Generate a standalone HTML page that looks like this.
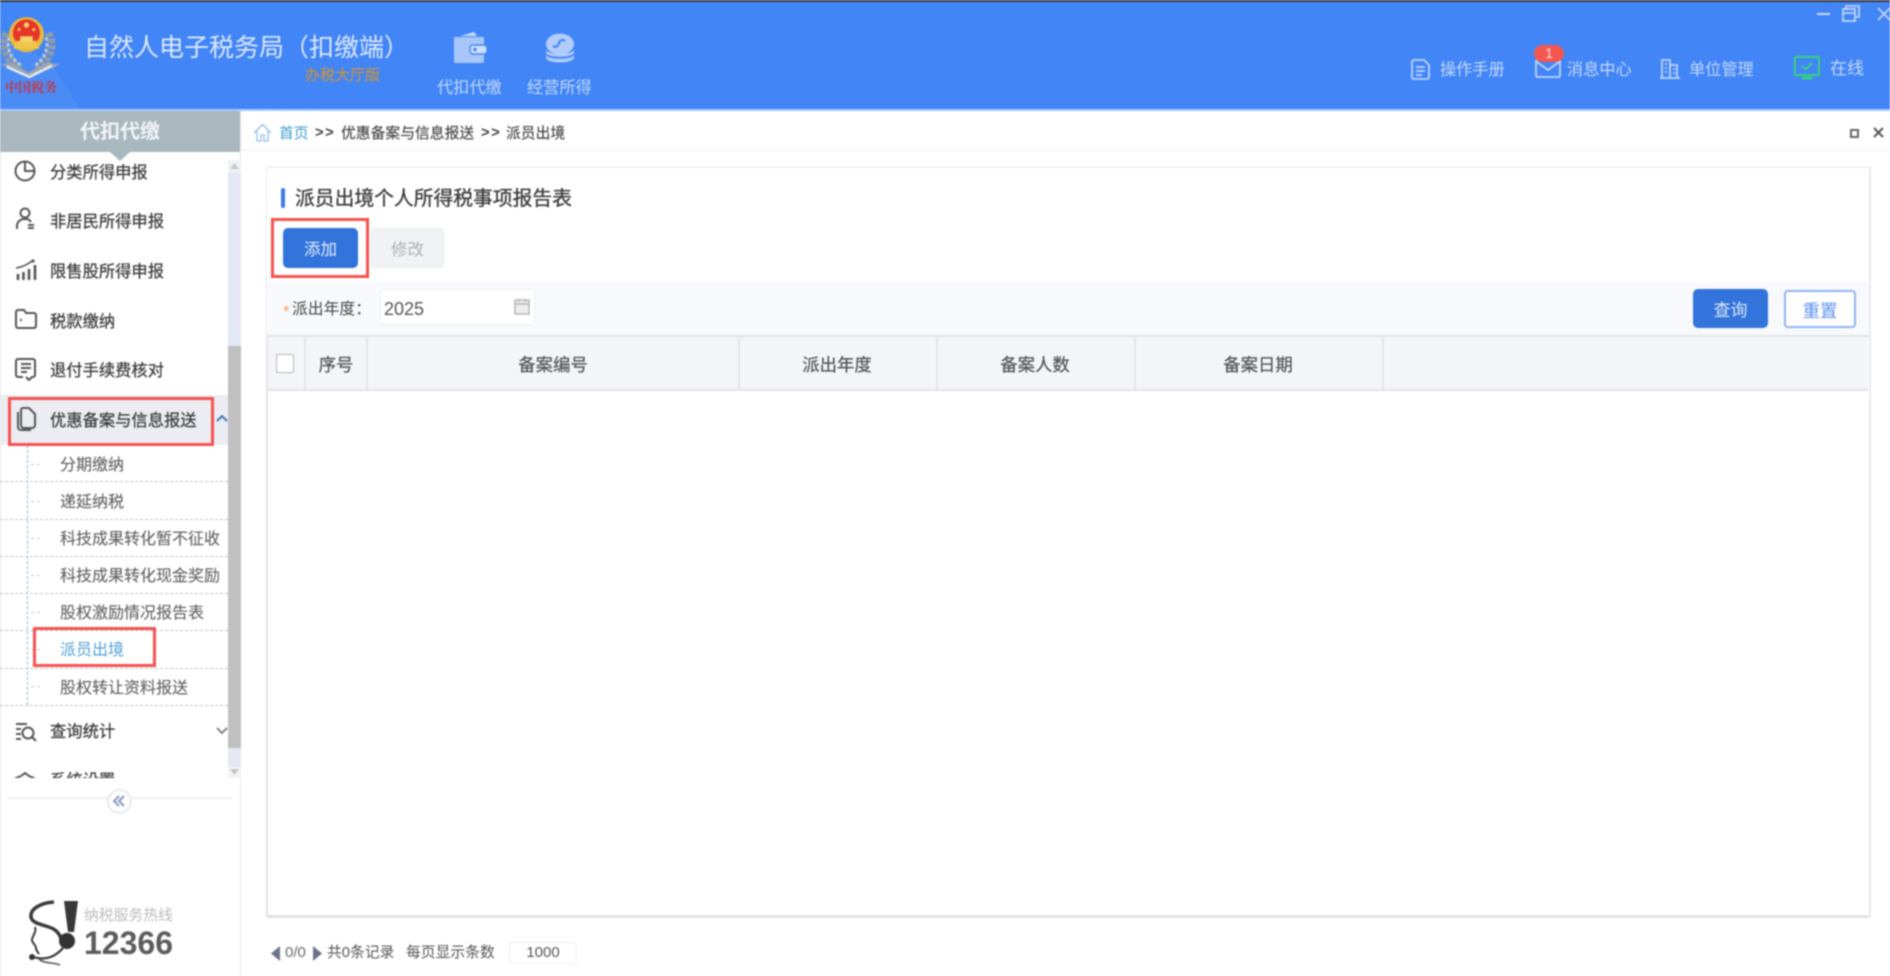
<!DOCTYPE html>
<html lang="zh-CN">
<head>
<meta charset="utf-8">
<title>自然人电子税务局（扣缴端）</title>
<style>
html,body{margin:0;padding:0;width:1890px;height:976px;overflow:hidden;background:#fff}
#w{position:relative;width:1890px;height:976px;overflow:hidden;background:#fff;filter:blur(.7px);font-family:"Liberation Sans","Noto Sans CJK SC",sans-serif;color:#444}
#w div,#w svg{position:absolute}
.t{white-space:nowrap;line-height:24px;height:24px}
.h{color:rgba(255,255,255,.68);font-size:16.2px}
.m{font-size:16.3px;color:#3a3a3a;left:50px;-webkit-text-stroke:.25px #3a3a3a}
.s{font-size:16px;color:#606060;left:60px;-webkit-text-stroke:.1px #606060}
.d{left:0;width:228px;border-top:1px dashed #c4c4c4;height:0}
.b{left:31px;width:9px;border-top:1px dashed #b4cfec;height:0}
.th{font-size:17.4px;color:#505050;top:353px;text-align:center;-webkit-text-stroke:.2px #505050}
.sep{top:337px;height:53px;width:2px;background:#e2e4e8}
.i{fill:none;stroke:#555;stroke-width:2}
.ih{fill:none;stroke:rgba(255,255,255,.65);stroke-width:1.8}
</style>
</head>
<body>
<div id="w">
  <!-- header -->
  <div style="left:0;top:0;width:1890px;height:110px;background:#4285f6"></div>
  <div style="left:0;top:0;width:1890px;height:2px;background:#33363b"></div>
  <div style="left:0;top:109px;width:1890px;height:2px;background:#a9c8fa"></div>
  <svg style="left:0;top:2px" width="90" height="108"><polygon points="0,30 50,60 80,107 0,107" fill="#4a8bf6"/></svg>

  <!-- emblem -->
  <svg style="left:0;top:0" width="66" height="80" viewBox="0 0 66 80">
    <g transform="translate(-3.500 -1) scale(1.13)">
    <path d="M9 30C4 42 8 54 22 62" fill="none" stroke="#8f9ca9" stroke-width="7" stroke-dasharray="4 1.500"/>
    <path d="M46 30C52 42 48 52 36 62" fill="none" stroke="#8f9ca9" stroke-width="7" stroke-dasharray="4 1.500"/>
    <path d="M11 34C9 44 12 52 22 59M44 34C46 44 43 52 34 59" fill="none" stroke="#c3ccd4" stroke-width="2.500" stroke-dasharray="3 2"/>
    <circle cx="26.500" cy="31.500" r="15.500" fill="#e6bb3e"/>
    <circle cx="26.500" cy="30" r="12" fill="#e8352a"/>
    <path d="M18 37h17l3 7H15z" fill="#efc64a"/>
    <rect x="21" y="33" width="11" height="5" fill="#f2d468"/>
    <circle cx="26.500" cy="23" r="2.300" fill="#f7dc60"/><circle cx="20" cy="27" r="1.300" fill="#f7dc60"/><circle cx="33" cy="27" r="1.300" fill="#f7dc60"/>
    <path d="M4 58l9-2 15 9 17-9 11 2-27 12z" fill="#9aa6b1"/>
    <path d="M9 60l20 9 20-10" fill="none" stroke="#e4e9ee" stroke-width="2.200"/>
    </g>
  </svg>
  <div class="t" style="left:5px;top:76px;width:54px;font:700 13px/22px 'Noto Serif CJK SC','Liberation Serif',serif;color:#c8343f;white-space:nowrap">中国税务</div>

  <div class="t" style="left:84px;top:32px;font-size:25px;line-height:32px;height:32px;color:rgba(255,255,255,.82)">自然人电子税务局（扣缴端）</div>
  <div class="t" style="left:305px;top:64px;font-size:15px;color:#c39243;-webkit-text-stroke:.2px #c39243">办税大厅版</div>

  <!-- top nav icons -->
  <svg style="left:452px;top:31px" width="36" height="34" viewBox="0 0 36 34">
    <path d="M2 6h28a2 2 0 0 1 2 2v22a2 2 0 0 1-2 2H4a2 2 0 0 1-2-2z" fill="#a9c6fb"/>
    <path d="M8 5l14-4 3 4z" fill="#c7dafc"/>
    <rect x="18" y="14" width="17" height="9" rx="3" fill="#cfe0fd" stroke="#4285f6" stroke-width="1.400"/>
    <circle cx="23" cy="18.500" r="1.800" fill="#4285f6"/>
  </svg>
  <div class="t h" style="left:437px;top:76px">代扣代缴</div>
  <svg style="left:545px;top:33px" width="30" height="32" viewBox="0 0 30 32">
    <ellipse cx="15" cy="11" rx="14" ry="10.500" fill="#b2ccfb"/>
    <path d="M20 8c-2-2-5-1-6 2s-3 5-6 3" fill="none" stroke="#4285f6" stroke-width="2.200"/>
    <path d="M1 17c2 5 26 5 28 0v3c-2 5-26 5-28 0zM1 22c2 5 26 5 28 0v3c-2 6-26 6-28 0z" fill="#b2ccfb"/>
  </svg>
  <div class="t h" style="left:527px;top:76px">经营所得</div>

  <!-- right nav -->
  <svg class="ih" style="left:1411px;top:59px" width="20" height="21" viewBox="0 0 20 21"><path d="M3 1h10l5 5v12a2 2 0 0 1-2 2H3a2 2 0 0 1-2-2V3a2 2 0 0 1 2-2zM5 8h9M5 12h9M5 16h6"/></svg>
  <div class="t h" style="left:1440px;top:58px">操作手册</div>
  <svg class="ih" style="left:1535px;top:59px" width="26" height="19" viewBox="0 0 26 19"><rect x="1" y="1" width="24" height="17" rx="1.500"/><path d="M2 3l11 8 11-8"/></svg>
  <div style="left:1534px;top:45px;width:30px;height:17px;border-radius:9px;background:#f4574f;color:#ffdcd8;font-size:14px;line-height:17px;text-align:center">1</div>
  <div class="t h" style="left:1567px;top:58px">消息中心</div>
  <svg class="ih" style="left:1659px;top:59px" width="22" height="20" viewBox="0 0 22 20"><path d="M3 19V1h8v18M11 6h7v13M1 19h20M6 5h2M6 9h2M6 13h2M14 10h2M14 14h2"/></svg>
  <div class="t h" style="left:1689px;top:58px">单位管理</div>
  <svg style="left:1794px;top:56px" width="26" height="24" viewBox="0 0 26 24" fill="none" stroke="#33d27f" stroke-width="2"><rect x="1" y="1" width="24" height="18" rx="1"/><path d="M8 10l4 3 6-6"/><path d="M8 22h10" stroke-width="3"/></svg>
  <div class="t h" style="left:1830px;top:57px;font-size:17px">在线</div>

  <!-- window controls -->
  <div style="left:1817px;top:13px;width:13px;height:2px;background:rgba(255,255,255,.72)"></div>
  <svg class="ih" style="left:1842px;top:5px" width="18" height="17" viewBox="0 0 18 17"><rect x="1" y="4" width="12" height="12" fill="none"/><path d="M4 4V1h13v11h-3M2 8h10"/></svg>
  <svg class="ih" style="left:1877px;top:7px" width="13" height="14" viewBox="0 0 13 14"><path d="M1 1l12 12M13 1L1 13"/></svg>

  <!-- sidebar -->
  <div style="left:0;top:111px;width:240px;height:41px;background:#a9b7bf"></div>
  <svg style="left:110px;top:152px" width="20" height="9"><polygon points="0,0 20,0 10,9" fill="#a9b7bf"/></svg>
  <div class="t" style="left:80px;top:120px;font-size:20px;color:rgba(255,255,255,.85);font-weight:700">代扣代缴</div>
  <div style="left:0;top:152px;width:1px;height:824px;background:#e3e3e3"></div>
  <div style="left:240px;top:111px;width:1px;height:865px;background:#e6e6e6"></div>

  <!-- icons -->
  <svg class="i" style="left:14px;top:160px" width="22" height="22" viewBox="0 0 22 22" stroke-width="2.200"><circle cx="11" cy="11" r="9.500"/><path d="M11 1.500V11H20.500"/></svg>
  <svg class="i" style="left:15px;top:207px" width="20" height="23" viewBox="0 0 20 23" stroke-width="1.800"><circle cx="10" cy="6" r="4.500"/><path d="M2 22v-3c0-4 3-7 8-7 3 0 5 1 6 3M13 18h6M13 21h6"/></svg>
  <svg class="i" style="left:15px;top:259px" width="22" height="22" viewBox="0 0 22 22"><path d="M1 9c6-1 11-3 16-7" stroke-width="1.600"/><circle cx="18" cy="2" r="1.600" fill="#555" stroke="none"/><path d="M3 21v-6M8.500 21v-8M14 21V10M20 21V6" stroke-width="2.600"/></svg>
  <svg class="i" style="left:15px;top:309px" width="22" height="20" viewBox="0 0 22 20" stroke-width="1.800"><path d="M1 3c0-1 1-2 2-2h6l2 3h8c1 0 2 1 2 2v11c0 1-1 2-2 2H3c-1 0-2-1-2-2z"/><path d="M5 11h2"/></svg>
  <svg class="i" style="left:15px;top:358px" width="21" height="23" viewBox="0 0 21 23"><path d="M8 19H3a2 2 0 0 1-2-2V3a2 2 0 0 1 2-2h15a2 2 0 0 1 2 2v14a2 2 0 0 1-2 2h-1l-3 3-3-3"/><path d="M6 6h10M6 10h10M6 14h6"/></svg>

  <div class="t m" style="top:161px">分类所得申报</div>
  <div class="t m" style="top:210px">非居民所得申报</div>
  <div class="t m" style="top:260px">限售股所得申报</div>
  <div class="t m" style="top:310px">税款缴纳</div>
  <div class="t m" style="top:359px">退付手续费核对</div>

  <!-- active row -->
  <div style="left:1px;top:395px;width:227px;height:50px;background:#ebedf2"></div>
  <svg class="i" style="left:16px;top:407px" width="20" height="24" viewBox="0 0 20 24"><path d="M5 3a2 2 0 0 1 2-2h6l6 6v11a3 3 0 0 1-3 3H8a3 3 0 0 1-3-3z"/><path d="M2 5v15a3 3 0 0 0 3 3h10"/></svg>
  <div class="t m" style="top:409px">优惠备案与信息报送</div>
  <svg style="left:216px;top:414px" width="12" height="8" fill="none" stroke="#3f78b8" stroke-width="2"><path d="M1 7l5-5 5 5"/></svg>

  <!-- sub menu -->
  <div style="left:27px;top:445px;height:260px;border-left:1px dashed #8db2e0;width:0"></div>
  <div class="b" style="top:464px"></div><div class="b" style="top:501px"></div><div class="b" style="top:538px"></div>
  <div class="b" style="top:575px"></div><div class="b" style="top:612px"></div><div class="b" style="top:649px"></div><div class="b" style="top:686px"></div>
  <div class="d" style="top:481px"></div><div class="d" style="top:519px"></div><div class="d" style="top:556px"></div>
  <div class="d" style="top:593px"></div><div class="d" style="top:630px"></div><div class="d" style="top:668px"></div><div class="d" style="top:705px"></div>
  <div class="t s" style="top:454px">分期缴纳</div>
  <div class="t s" style="top:491px">递延纳税</div>
  <div class="t s" style="top:528px">科技成果转化暂不征收</div>
  <div class="t s" style="top:565px">科技成果转化现金奖励</div>
  <div class="t s" style="top:602px">股权激励情况报告表</div>
  <div class="t s" style="top:639px;color:#4f9fd6;-webkit-text-stroke:0">派员出境</div>
  <div class="t s" style="top:677px">股权转让资料报送</div>

  <svg class="i" style="left:15px;top:722px" width="22" height="20" viewBox="0 0 22 20" stroke-width="1.600"><path d="M1 2h11M1 7h5M1 12h5M1 17h5"/><circle cx="13" cy="11" r="5.500"/><path d="M17 15l4 4"/></svg>
  <div class="t m" style="top:720px">查询统计</div>
  <svg style="left:216px;top:727px" width="12" height="8" fill="none" stroke="#888" stroke-width="2"><path d="M1 1l5 5 5-5"/></svg>
  <!-- clipped row -->
  <div style="left:0;top:766px;width:228px;height:12px;overflow:hidden">
    <svg class="i" style="left:14px;top:3px" width="22" height="22" viewBox="0 0 22 22"><path d="M2 9l5-2 4-3 4 3 5 2v8H2z"/></svg>
    <div class="t m" style="top:3px">系统设置</div>
  </div>

  <!-- scrollbar -->
  <div style="left:228px;top:160px;width:13px;height:618px;background:#e3e8f2"></div>
  <div style="left:228px;top:160px;width:13px;height:13px;background:#f0f1f4"></div>
  <svg style="left:230px;top:163px" width="10" height="7"><polygon points="0,6 9,6 4.500,0" fill="#c8c8c8"/></svg>
  <div style="left:228px;top:346px;width:13px;height:402px;background:#c0c0c0"></div>
  <div style="left:228px;top:767px;width:13px;height:11px;background:#f3f3f3"></div>
  <svg style="left:230px;top:769px" width="10" height="7"><polygon points="0,0 9,0 4.500,6" fill="#c4c4c4"/></svg>

  <!-- collapse -->
  <div style="left:7px;top:797px;width:226px;height:2px;background:#eeeff1"></div>
  <div style="left:107px;top:789px;width:21px;height:21px;background:#fff;border:2px solid #e9ebf1;border-radius:50%"></div>
  <svg style="left:113px;top:795px" width="12" height="12" fill="none" stroke="#8d9ec8" stroke-width="2.200"><path d="M6 1L1 6l5 5M11 1L6 6l5 5"/></svg>

  <!-- hotline -->
  <svg style="left:28px;top:899px" width="50" height="68" viewBox="0 0 50 68">
    <path d="M26 3C12 4 2 10 3 18c1 8 18 8 24 13 4 3 7 8 6 13" fill="none" stroke="#3a3a3a" stroke-width="3.500"/>
    <path d="M36 2h14l-4 31h-6z" fill="#383838"/>
    <circle cx="39" cy="42" r="8" fill="#333"/>
    <path d="M7 28c2 5-3 9-3 13 0 3 4 5 4 8 0 3 2 4 3 6" fill="none" stroke="#3a3a3a" stroke-width="2"/>
    <path d="M35 49C28 57 18 62 5 58" fill="none" stroke="#3a3a3a" stroke-width="2.200"/>
    <circle cx="4" cy="58" r="3" fill="#333"/>
    <path d="M11 60c5 5 14 3 21 6" fill="none" stroke="#555" stroke-width="1.600"/>
  </svg>
  <div class="t" style="left:84px;top:904px;font-size:14.800px;color:#bcbcbc">纳税服务热线</div>
  <div class="t" style="left:84px;top:925px;font-size:32px;line-height:36px;height:36px;font-weight:700;color:#5c5c5c">12366</div>

  <!-- breadcrumb -->
  <svg style="left:253px;top:123px" width="19" height="20" viewBox="0 0 19 20" fill="none" stroke="#a8cbe8" stroke-width="1.600"><path d="M1 10l8.500-8.500L18 10M4 8v10h4v-6h3v6h4V8"/></svg>
  <div class="t" style="left:279px;top:122px;font-size:14.800px;color:#3d9ccf">首页</div>
  <div class="t" style="left:315px;top:121px;font-size:14.800px;color:#444;font-weight:700;letter-spacing:1.500px">&gt;&gt;</div>
  <div class="t" style="left:341px;top:122px;font-size:14.800px;color:#444;-webkit-text-stroke:.15px #444">优惠备案与信息报送</div>
  <div class="t" style="left:481px;top:121px;font-size:14.800px;color:#444;font-weight:700;letter-spacing:1.500px">&gt;&gt;</div>
  <div class="t" style="left:506px;top:122px;font-size:14.800px;color:#444;-webkit-text-stroke:.15px #444">派员出境</div>
  <div style="left:241px;top:150px;width:1649px;height:1px;background:#f0f1f3"></div>
  <div style="left:1850px;top:129px;width:5px;height:5px;border:2px solid #666"></div>
  <svg style="left:1873px;top:127px" width="11" height="11" fill="none" stroke="#555" stroke-width="2"><path d="M1 1l9 9M10 1L1 10"/></svg>

  <!-- content card -->
  <div style="left:266px;top:167px;width:1604px;height:750px;border:1px solid #e9eaec;box-sizing:border-box;background:#fff"></div>
  <div style="left:281px;top:188px;width:4px;height:20px;background:#3b7bea;border-radius:2px"></div>
  <div class="t" style="left:295px;top:187px;font-size:19.800px;color:#3b3b3b;-webkit-text-stroke:.35px #3b3b3b">派员出境个人所得税事项报告表</div>

  <div style="left:283px;top:228px;width:75px;height:40px;background:#3274dc;border-radius:5px;color:rgba(255,255,255,.88);font-size:16.500px;line-height:44px;text-align:center">添加</div>
  <div style="left:371px;top:228px;width:73px;height:40px;background:#f1f2f4;border:1px solid #eceef0;box-sizing:border-box;border-radius:3px;color:#aeb0b4;font-size:16.500px;line-height:42px;text-align:center">修改</div>
  <div style="left:271px;top:218px;width:98px;height:60px;border:3px solid #f65050;box-sizing:border-box"></div>
  <div style="left:8px;top:397px;width:206px;height:49px;border:3px solid #f65050;box-sizing:border-box"></div>
  <div style="left:33px;top:627px;width:123px;height:40px;border:3px solid #f65050;box-sizing:border-box"></div>

  <!-- filter band -->
  <div style="left:268px;top:282px;width:1601px;height:53px;background:#f7f9fc"></div>
  <div class="t" style="left:283px;top:300px;font-size:17px;color:#f3a06a">*</div>
  <div class="t" style="left:292px;top:298px;font-size:15.800px;color:#444">派出年度：</div>
  <div style="left:380px;top:289px;width:155px;height:36px;background:#fff;border:1px solid #eff0f3;box-sizing:border-box;border-radius:4px"></div>
  <div class="t" style="left:384px;top:297px;font-size:18px;color:#555">2025</div>
  <svg style="left:514px;top:298px" width="16" height="17" viewBox="0 0 16 17" fill="none" stroke="#b4b4b4" stroke-width="1.400"><rect x="1" y="2" width="14" height="14" fill="#eee"/><path d="M1 6h14M5 1v3M11 1v3"/></svg>
  <div style="left:1693px;top:289px;width:75px;height:39px;background:#3274dc;border-radius:5px;color:rgba(255,255,255,.85);font-size:17px;line-height:43px;text-align:center">查询</div>
  <div style="left:1784px;top:290px;width:72px;height:38px;background:#fff;border:2px solid #8fb3f3;box-sizing:border-box;border-radius:4px;color:#5a8fee;font-size:17.500px;line-height:38px;text-align:center">重置</div>

  <!-- table -->
  <div style="left:267px;top:335px;width:1602px;height:2px;background:#e3e4e6"></div>
  <div style="left:268px;top:337px;width:1600px;height:53px;background:#f3f5f9"></div>
  <div style="left:268px;top:389px;width:1600px;height:2px;background:#e2e4e8"></div>
  <div class="sep" style="left:304px"></div>
  <div class="sep" style="left:366px"></div>
  <div class="sep" style="left:738px"></div>
  <div class="sep" style="left:936px"></div>
  <div class="sep" style="left:1134px"></div>
  <div class="sep" style="left:1382px"></div>
  <div style="left:276px;top:354px;width:18px;height:19px;background:#fff;border:1px solid #b8b8b8;box-sizing:border-box;border-radius:2px"></div>
  <div class="t th" style="left:306px;width:60px">序号</div>
  <div class="t th" style="left:368px;width:370px">备案编号</div>
  <div class="t th" style="left:739px;width:196px">派出年度</div>
  <div class="t th" style="left:937px;width:196px">备案人数</div>
  <div class="t th" style="left:1135px;width:246px">备案日期</div>
  <div style="left:266px;top:915px;width:1605px;height:3px;background:#e1e2e3"></div>
  <div style="left:266px;top:337px;width:2px;height:580px;background:#e4e5e7"></div>
  <div style="left:1869px;top:167px;width:2px;height:750px;background:#e9eaec"></div>

  <!-- pager -->
  <svg style="left:271px;top:946px" width="10" height="15"><polygon points="9,0 9,15 0,7.500" fill="#6b7486"/></svg>
  <div class="t" style="left:285px;top:941px;font-size:15px;color:#666">0/0</div>
  <svg style="left:313px;top:946px" width="10" height="15"><polygon points="0,0 0,15 9,7.500" fill="#6b7486"/></svg>
  <div class="t" style="left:327px;top:941px;font-size:14.800px;color:#555">共0条记录</div>
  <div class="t" style="left:406px;top:941px;font-size:14.800px;color:#555">每页显示条数</div>
  <div style="left:509px;top:942px;width:68px;height:22px;background:#fff;border:1px solid #eceef0;box-sizing:border-box;border-radius:3px;font-size:15px;line-height:20px;text-align:center;color:#555">1000</div>
</div>
</body>
</html>
